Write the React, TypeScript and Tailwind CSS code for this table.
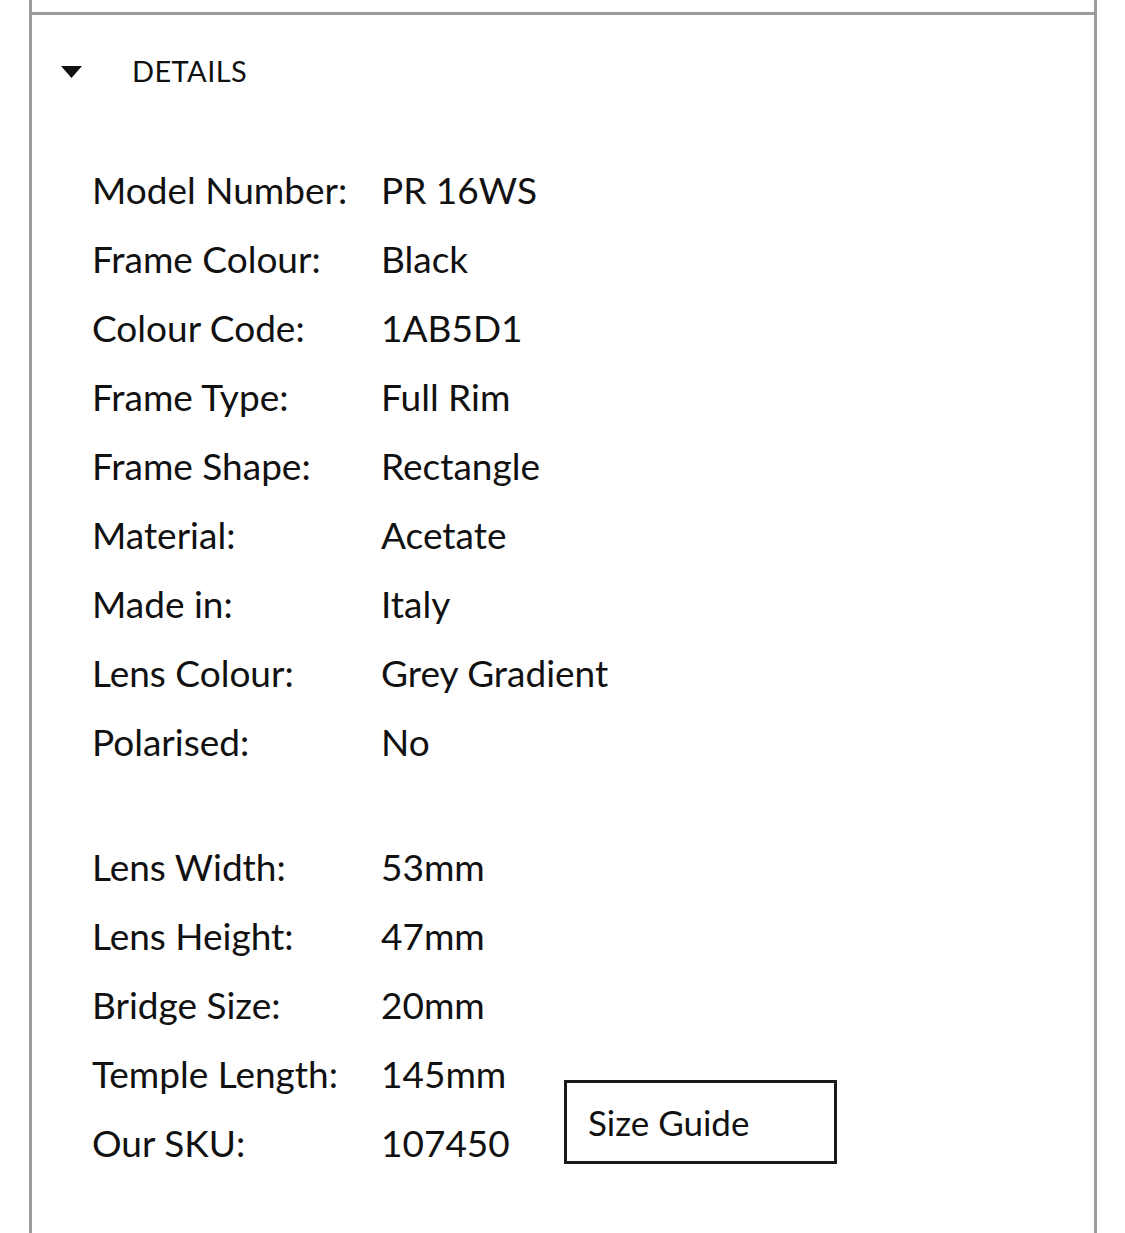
import React from 'react';

const specs: [string, string][] = [
  ['Model Number:', 'PR 16WS'],
  ['Frame Colour:', 'Black'],
  ['Colour Code:', '1AB5D1'],
  ['Frame Type:', 'Full Rim'],
  ['Frame Shape:', 'Rectangle'],
  ['Material:', 'Acetate'],
  ['Made in:', 'Italy'],
  ['Lens Colour:', 'Grey Gradient'],
  ['Polarised:', 'No'],
];

const sizes: [string, string][] = [
  ['Lens Width:', '53mm'],
  ['Lens Height:', '47mm'],
  ['Bridge Size:', '20mm'],
  ['Temple Length:', '145mm'],
  ['Our SKU:', '107450'],
];

const Row: React.FC<{ label: string; value: string }> = ({ label, value }) => (
  <div className="flex h-[69px] items-center">
    <div className="w-[289px] shrink-0">{label}</div>
    <div>{value}</div>
  </div>
);

const App: React.FC = () => {
  return (
    <div
      className="w-[1125px] h-[1233px] overflow-hidden bg-white pl-[29px] text-[#111111]"
      style={{ fontFamily: 'Lato, "Open Sans", sans-serif' }}
    >
      <div className="w-[1068px] h-full border-x-[3px] border-[#9b9b9b]">
        <div className="h-[12px]" />
        <div className="border-t-[3px] border-[#9b9b9b]">
          {/* Accordion header */}
          <div className="flex h-[112px] items-center pl-[29px]">
            <svg width="21" height="12" viewBox="0 0 21 12" className="mt-[2px]">
              <polygon points="0,0 21,0 10.5,12" fill="#111111" />
            </svg>
            <span className="ml-[50px] text-[29px] tracking-[0.4px]">DETAILS</span>
          </div>

          {/* Spec list */}
          <div className="mt-[28px] pl-[60px] text-[37px]">
            <div>
              {specs.map(([l, v]) => (
                <Row key={l} label={l} value={v} />
              ))}
            </div>

            <div className="mt-[56px] flex items-end">
              <div className="w-[472px] shrink-0">
                {sizes.map(([l, v]) => (
                  <Row key={l} label={l} value={v} />
                ))}
              </div>
              <button className="mb-[13px] flex h-[84px] w-[273px] items-center border-[3px] border-[#1a1a1a] pl-[21px] text-[35px]">
                Size Guide
              </button>
            </div>
          </div>
        </div>
      </div>
    </div>
  );
};

export default App;
